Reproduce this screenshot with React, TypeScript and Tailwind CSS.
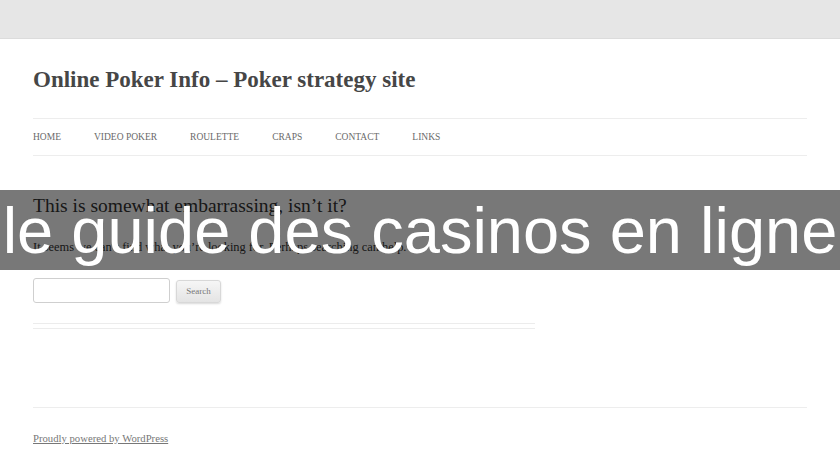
export default function App() {
  const nav = ["HOME", "VIDEO POKER", "ROULETTE", "CRAPS", "CONTACT", "LINKS"];

  return (
    <div className="relative h-[460px] w-[840px] overflow-hidden bg-white font-['Liberation_Serif',serif]">
      <div className="h-[39px] border-b border-[#dcdcdc] bg-[#e6e6e6]" />

      <div className="px-[33px]">
        <header>
          <h1 className="mt-[26px] text-[23px] font-bold leading-[30px] text-[#464646]">
            Online Poker Info – Poker strategy site
          </h1>
          <nav className="mt-[23px] flex gap-[33px] border-y border-[#ededed] py-[13px] text-[9.5px] leading-[10px] text-[#6a6a6a]">
            {nav.map((item) => (
              <span key={item}>{item}</span>
            ))}
          </nav>
        </header>

        <main className="w-[502px]">
          <h2 className="mt-[39px] text-[19.5px] leading-[22px] text-[#333]">
            This is somewhat embarrassing, isn’t it?
          </h2>
          <p className="mt-[22px] whitespace-nowrap text-[12.4px] leading-[16px] text-[#333]">
            It seems we can’t find what you’re looking for. Perhaps searching can help.
          </p>
          <div className="mt-[23px] flex items-end gap-[6px]">
            <div className="h-[25px] w-[137px] rounded-[3px] border border-[#cfcfcf] bg-white" />
            <div className="flex h-[23px] w-[45px] items-center justify-center rounded-[3px] border border-[#d8d8d8] bg-gradient-to-b from-[#f6f6f6] to-[#e4e4e4] text-[9px] text-[#777] shadow-[0_1px_2px_rgba(0,0,0,0.15)]">
              Search
            </div>
          </div>
          <div className="mt-[20px] h-[6px] border-y border-[#ececec]" />
        </main>

        <footer className="mt-[78px] border-t border-[#ededed] pt-[23px] text-[10.7px] leading-[14px] text-[#777]">
          <span className="underline">Proudly powered by WordPress</span>
        </footer>
      </div>

      <div className="absolute left-0 right-0 top-[190px] flex h-[80px] items-center justify-center bg-black/[0.53]">
        <span className="font-['Liberation_Sans',Arial,sans-serif] text-[65px] leading-none text-white">
          le guide des casinos en ligne
        </span>
      </div>
    </div>
  );
}
